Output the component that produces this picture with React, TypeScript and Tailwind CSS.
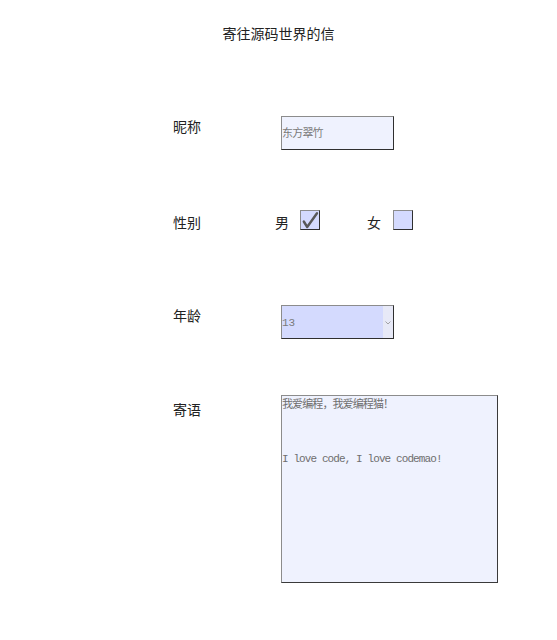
import React from "react";

const sans = { fontFamily: '"Noto Sans CJK SC", "Noto Sans", sans-serif' };
const serif = {
  fontFamily: '"Liberation Mono", "Noto Sans CJK SC", monospace',
};

function Box({ checked }: { checked?: boolean }) {
  return (
    <span className="inline-flex h-[20px] w-[20px] items-center justify-center border border-t-[#8c8c8c] border-l-[#8c8c8c] border-r-[#2f2f2f] border-b-[#2f2f2f] bg-[#d4dafe]">
      {checked && (
        <svg width="18" height="18" viewBox="0 0 18 18">
          <path
            d="M2.8 10.5 L6.2 16 L16 2.2"
            fill="none"
            stroke="#585858"
            strokeWidth="2.4"
            strokeLinejoin="round"
            strokeLinecap="round"
          />
        </svg>
      )}
    </span>
  );
}

export default function App() {
  return (
    <div className="h-[640px] w-[557px] bg-white text-[#222]" style={sans}>
      <div className="pt-[23px] text-center text-[14px] leading-5 text-[#222]">
        寄往源码世界的信
      </div>

      <div className="mt-[73px] flex items-start pl-[173px]">
        <div className="w-[108px] text-[14px] leading-5">昵称</div>
        <div className="flex h-[34px] w-[113px] items-center border border-t-[#8c8c8c] border-l-[#8c8c8c] border-r-[#2f2f2f] border-b-[#2f2f2f] bg-[#eff2fe] pt-[2px]">
          <input
            defaultValue="东方翠竹"
            className="w-full bg-transparent text-[11px] tracking-[-0.8px] text-[#7a7a7a] outline-none"
            style={serif}
          />
        </div>
      </div>

      <div className="mt-[62px] flex h-[20px] items-center pl-[173px]">
        <div className="w-[102px] text-[14px] leading-5">性别</div>
        <span className="text-[14px] leading-5">男</span>
        <span className="ml-[11px]">
          <Box checked />
        </span>
        <span className="ml-[47px] text-[14px] leading-5">女</span>
        <span className="ml-[12px]">
          <Box />
        </span>
      </div>

      <div className="mt-[73px] flex items-start pl-[173px]">
        <div className="w-[108px] text-[14px] leading-5">年龄</div>
        <div className="flex h-[34px] w-[113px] border border-t-[#8c8c8c] border-l-[#8c8c8c] border-r-[#2f2f2f] border-b-[#2f2f2f]">
          <select
            defaultValue="13"
            className="h-full min-w-0 flex-1 appearance-none bg-[#d4dafe] pt-[3px] text-[11px] text-[#7a7a7a] outline-none"
            style={serif}
          >
            <option value="13">13</option>
          </select>
          <span className="flex w-[10px] items-center justify-center bg-[#e7e9f7] pt-[1px]">
            <svg width="6" height="4" viewBox="0 0 6 4">
              <path d="M0.5 0.5 L3 3 L5.5 0.5" fill="none" stroke="#9a9a9a" strokeWidth="0.9" />
            </svg>
          </span>
        </div>
      </div>

      <div className="mt-[56px] flex items-start pl-[173px]">
        <div className="mt-[4px] w-[108px] text-[14px] leading-5">寄语</div>
        <textarea
          defaultValue={"我爱编程，我爱编程猫！\n\n\nI love code, I love codemao!"}
          className="h-[188px] w-[217px] resize-none border border-t-[#8c8c8c] border-l-[#8c8c8c] border-r-[#3a3a3a] border-b-[#3a3a3a] bg-[#eff2fe] text-[11px] leading-[18px] tracking-[-0.9px] text-[#6e6e6e] outline-none"
          style={serif}
        />
      </div>
    </div>
  );
}
